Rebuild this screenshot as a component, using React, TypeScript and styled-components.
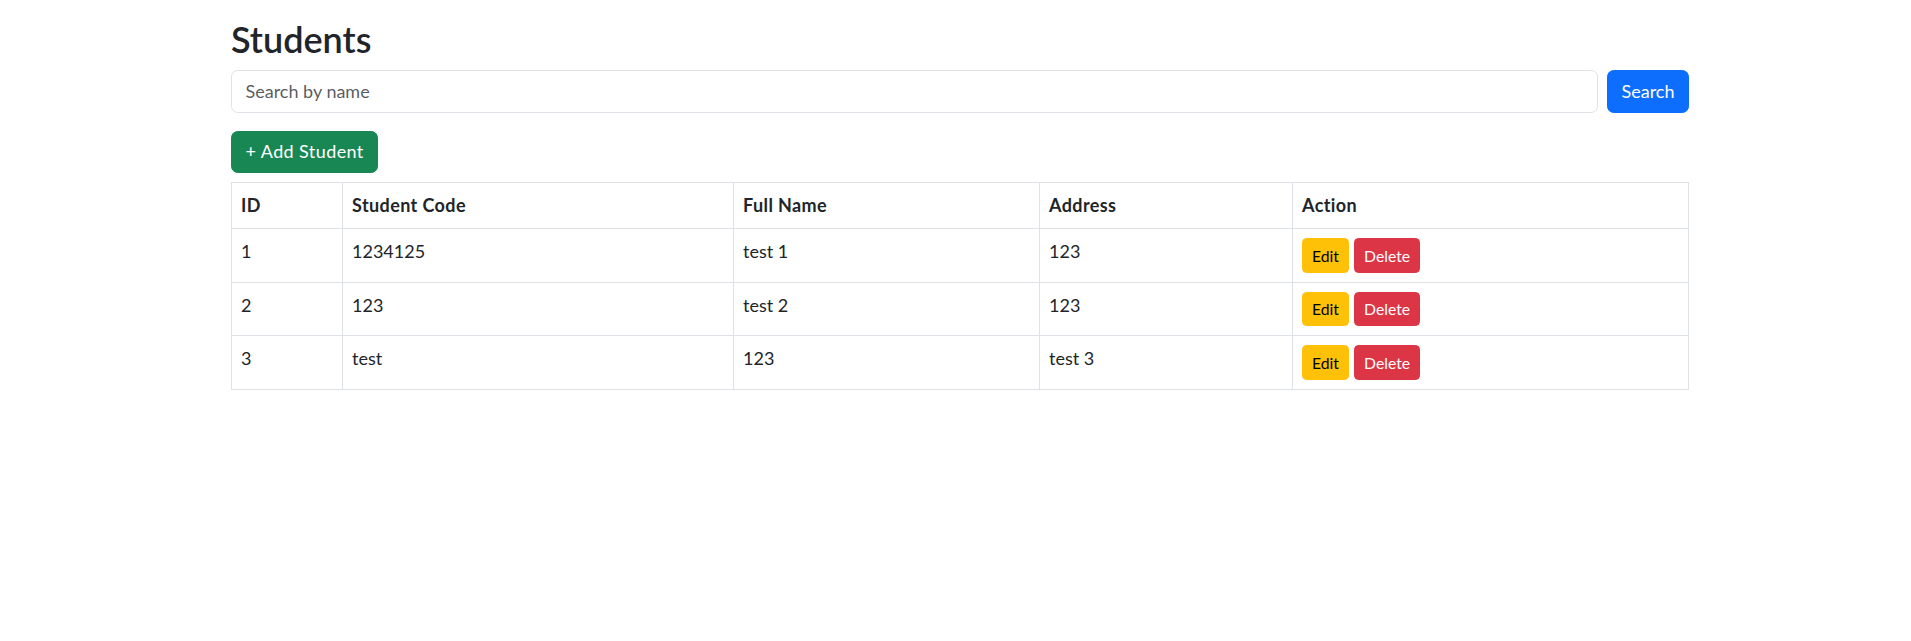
import React from "react";
import styled, { createGlobalStyle } from "styled-components";

const GlobalStyle = createGlobalStyle`
  *, *::before, *::after { box-sizing: border-box; }
  html, body { margin: 0; background: #fff; }
  body {
    padding-left: 9px;
    font-family: "Segoe UI", Lato, "Liberation Sans", sans-serif;
    font-size: 18px;
    line-height: 1.5;
    color: #212529;
  }
`;

const Container = styled.div`
  width: 1458px;
  margin: 0 auto;
  padding-top: 18px;
`;

const Title = styled.h2`
  margin: 0 0 9px;
  font-size: 36px;
  font-weight: 600;
  line-height: 1.2;
`;

const SearchRow = styled.form`
  display: flex;
  gap: 9px;
  margin-bottom: 18px;
`;

const SearchInput = styled.input`
  flex: 1;
  padding: 6.75px 13.5px;
  font: inherit;
  font-size: 18px;
  line-height: 27px;
  color: #212529;
  border: 1px solid #dee2e6;
  border-radius: 6.75px;
  outline: none;
  &::placeholder { color: rgba(33, 37, 41, 0.75); }
`;

const Button = styled.button<{ $bg: string; $fg?: string }>`
  padding: 6.75px 13.5px;
  font: inherit;
  font-size: 18px;
  line-height: 27px;
  color: ${(p) => p.$fg ?? "#fff"};
  background: ${(p) => p.$bg};
  border: 1px solid ${(p) => p.$bg};
  border-radius: 6.75px;
  cursor: pointer;
`;

const AddButton = styled(Button)`
  display: block;
  margin-bottom: 9px;
  letter-spacing: 0.4px;
`;

const SmallButton = styled.button<{ $bg: string; $fg: string }>`
  padding: 4.5px 9px;
  font: inherit;
  font-size: 15.75px;
  line-height: 1.5;
  color: ${(p) => p.$fg};
  background: ${(p) => p.$bg};
  border: 1px solid ${(p) => p.$bg};
  border-radius: 4.5px;
  cursor: pointer;
`;

const Table = styled.table`
  width: 100%;
  border-collapse: collapse;
  table-layout: fixed;
  border: 1px solid #dee2e6;
  margin-bottom: 18px;
`;

const Th = styled.th<{ $w?: number }>`
  width: ${(p) => (p.$w ? `${p.$w}px` : "auto")};
  padding: 9px;
  text-align: left;
  vertical-align: bottom;
  font-weight: 700;
  letter-spacing: 0.4px;
  border: 1px solid #dee2e6;
`;

const Td = styled.td`
  padding: 9px;
  vertical-align: top;
  border: 1px solid #dee2e6;
`;

const Actions = styled.div`
  display: flex;
  gap: 5px;
`;

const students = [
  { id: 1, code: "1234125", name: "test 1", address: "123" },
  { id: 2, code: "123", name: "test 2", address: "123" },
  { id: 3, code: "test", name: "123", address: "test 3" },
];

export default function App() {
  return (
    <>
      <GlobalStyle />
      <Container>
        <Title>Students</Title>
        <SearchRow onSubmit={(e) => e.preventDefault()}>
          <SearchInput placeholder="Search by name" />
          <Button type="submit" $bg="#0d6efd">Search</Button>
        </SearchRow>
        <AddButton type="button" $bg="#198754">+ Add Student</AddButton>
        <Table>
          <thead>
            <tr>
              <Th $w={111}>ID</Th>
              <Th $w={391}>Student Code</Th>
              <Th $w={306}>Full Name</Th>
              <Th $w={253}>Address</Th>
              <Th>Action</Th>
            </tr>
          </thead>
          <tbody>
            {students.map((s) => (
              <tr key={s.id}>
                <Td>{s.id}</Td>
                <Td>{s.code}</Td>
                <Td>{s.name}</Td>
                <Td>{s.address}</Td>
                <Td>
                  <Actions>
                    <SmallButton type="button" $bg="#ffc107" $fg="#000">Edit</SmallButton>
                    <SmallButton type="button" $bg="#dc3545" $fg="#fff">Delete</SmallButton>
                  </Actions>
                </Td>
              </tr>
            ))}
          </tbody>
        </Table>
      </Container>
    </>
  );
}
